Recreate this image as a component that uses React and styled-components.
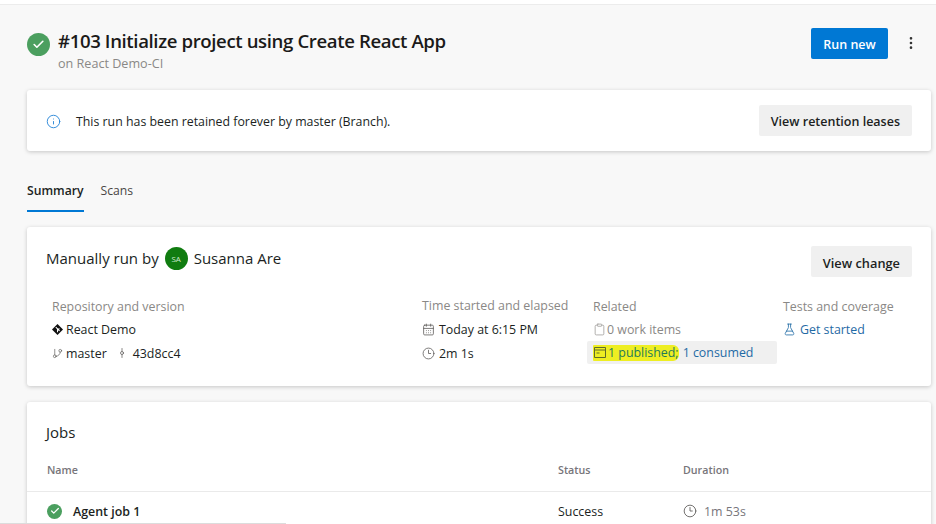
import styled, { createGlobalStyle } from "styled-components";
import { Info, CalendarDays, Clock3, GitBranch, GitCommitVertical, Clipboard, FlaskConical, Check, MoreVertical } from "lucide-react";

const Global = createGlobalStyle`
  html, body { margin: 0; padding: 0; background: #f8f8f8; }
  body { font-family: "Open Sans", "Noto Sans", sans-serif; color: #201f1e; overflow: hidden; }
`;

const Page = styled.div`
  position: relative;
  width: 936px;
  height: 524px;
  overflow: hidden;
  box-sizing: border-box;
  padding: 24px 5px 0 27px;
  border-top: 4px solid #fff;
  box-shadow: inset 0 1px 0 #ececec;
  background: #f8f8f8;
`;

const Header = styled.header`
  display: flex;
  align-items: flex-start;
  height: 62px;
`;

const StatusDot = styled.span`
  display: flex;
  align-items: center;
  justify-content: center;
  flex: none;
  width: ${(p) => p.size}px;
  height: ${(p) => p.size}px;
  border-radius: 50%;
  background: #4b9f5f;
  color: #fff;
`;

const TitleDot = styled(StatusDot)`
  margin-top: 5px;
`;

const TitleBlock = styled.div`
  margin-left: 8px;
  flex: 1;
`;

const Title = styled.h1`
  margin: -1px 0 2px;
  font-size: 18.6px;
  line-height: 27px;
  font-weight: 600;
  color: #1b1a19;
  letter-spacing: -0.38px;
`;

const Subtitle = styled.div`
  font-size: 12.6px;
  line-height: 16px;
  color: #8a8886;
`;

const PrimaryButton = styled.button`
  width: 77px;
  height: 31px;
  padding: 2px 0 0;
  border: 0;
  border-radius: 2px;
  background: #0078d4;
  color: #fff;
  font: 600 12.5px "Open Sans", sans-serif;
`;

const MoreButton = styled.span`
  display: flex;
  margin: 7px 12px 0 15px;
  color: #333;
`;

const Card = styled.section`
  background: #fff;
  border-radius: 3px;
  box-shadow: 0 1px 4px rgba(0, 0, 0, 0.2);
`;

const Banner = styled(Card)`
  display: flex;
  align-items: center;
  height: 61px;
  padding: 0 19px;
`;

const BannerIcon = styled.span`
  display: flex;
  margin-top: 1px;
  color: #2b88d8;
`;

const BannerText = styled.span`
  flex: 1;
  margin-left: 15px;
  padding-top: 2px;
  font-size: 12.35px;
`;

const SecondaryButton = styled.button`
  height: 31px;
  padding: 2px 12px 0;
  border: 0;
  border-radius: 2px;
  background: #f0f0f0;
  color: #201f1e;
  font: 600 ${(p) => p.$size}px "Open Sans", sans-serif;
`;

const Tabs = styled.nav`
  display: flex;
  gap: 17px;
  height: 45px;
  margin-top: 16px;
  margin-bottom: 15px;
`;

const Tab = styled.span`
  display: flex;
  align-items: center;
  box-sizing: border-box;
  height: 45px;
  padding-top: 3px;
  font-size: 12.2px;
  font-weight: ${(p) => (p.$active ? 600 : 400)};
  color: ${(p) => (p.$active ? "#201f1e" : "#484644")};
  border-bottom: 2px solid ${(p) => (p.$active ? "#0078d4" : "transparent")};
`;

const SummaryCard = styled(Card)`
  height: 159px;
  box-sizing: border-box;
  padding: 19px 19px 0;
`;

const SummaryHead = styled.div`
  display: flex;
  align-items: flex-start;
  height: 48px;
`;

const RunBy = styled.div`
  display: flex;
  align-items: center;
  flex: 1;
  height: 24px;
  font-size: 15px;
  color: #201f1e;
`;

const Avatar = styled.span`
  display: flex;
  align-items: center;
  justify-content: center;
  width: 23px;
  height: 23px;
  margin: 0 6px;
  border-radius: 50%;
  background: #107c10;
  color: #cfe8cf;
  font-size: 8px;
`;

const Columns = styled.div`
  display: grid;
  grid-template-columns: 370px 171px 190px 1fr;
  padding-left: 6px;
`;

const Column = styled.div`
  display: flex;
  flex-direction: column;
`;

const Label = styled.div`
  box-sizing: border-box;
  height: 23px;
  padding-top: ${(p) => p.$top}px;
  font-size: 12.4px;
  line-height: 21px;
  color: #8a8886;
  white-space: nowrap;
`;

const Row = styled.div`
  display: flex;
  align-items: center;
  gap: ${(p) => p.$gap}px;
  height: 24px;
  font-size: 12.4px;
  white-space: nowrap;
  color: ${(p) => p.$color || "#201f1e"};
`;

const RowIcon = styled.span`
  display: flex;
  color: ${(p) => p.$color || "#605e5c"};
`;

const Commit = styled.span`
  display: flex;
  align-items: center;
  gap: 5px;
  margin-left: 6px;
`;

const RelatedRow = styled.div`
  display: flex;
  align-items: center;
  width: 190px;
  height: 23px;
  margin: 0 0 0 -6px;
  padding-left: 6px;
  box-sizing: border-box;
  border-radius: 2px;
  background: #f0f0f0;
  font-size: 12.4px;
  color: #1f6aa5;
  white-space: nowrap;
`;

const Highlight = styled.span`
  display: flex;
  align-items: center;
  gap: 1px;
  height: 16px;
  margin-right: 4px;
  border-radius: 1px 6px 6px 1px;
  background: #eeee22;
  color: #1f7a5a;
`;

const JobsCard = styled(Card)`
  height: 140px;
  margin-top: 16px;
  padding-top: 18px;
`;

const JobsTitle = styled.h2`
  margin: 0 19px;
  font-size: 15px;
  line-height: 25px;
  font-weight: 400;
`;

const JobsGrid = styled.div`
  display: grid;
  grid-template-columns: 511px 125px 1fr;
  align-items: center;
  box-sizing: border-box;
  padding-left: 20px;
  height: ${(p) => p.$h}px;
  padding-top: ${(p) => (p.$head ? 3 : 0)}px;
  border-bottom: ${(p) => (p.$head ? "1px solid #eaeaea" : "0")};
`;

const ColHead = styled.span`
  font-size: 10.7px;
  font-weight: 600;
  color: #77757a;
`;

const JobName = styled.span`
  display: flex;
  align-items: center;
  gap: 11px;
  font-size: 12.4px;
  font-weight: 600;
`;

const Cell = styled.span`
  display: flex;
  align-items: center;
  gap: 7px;
  font-size: 12.4px;
  color: ${(p) => p.$color || "#201f1e"};
`;

const CropEdge = styled.div`
  position: absolute;
  left: 0;
  bottom: 0;
  width: 286px;
  height: 1px;
  background: #dcdcdc;
`;

const RepoIcon = () => (
  <svg width="11" height="11" viewBox="0 0 16 16" aria-hidden="true">
    <path fill="#111" d="M8 0 16 8 8 16 0 8Z" />
    <path fill="none" stroke="#fff" strokeWidth="1.5" d="M5.5 4.5 11 10M8 7.5V12M8 7.5 11 7" />
  </svg>
);

const ArtifactIcon = () => (
  <svg width="14" height="13" viewBox="0 0 14 13" fill="none" stroke="#5f6a2a" strokeWidth="1" aria-hidden="true">
    <path d="M1.5 1.5h11v2.5h-11zM1.5 4v7.5h11V4M3.5 7h3" />
  </svg>
);

export default function App() {
  return (
    <Page>
      <Global />
      <Header>
        <TitleDot size={23}>
          <Check size={13} strokeWidth={3} />
        </TitleDot>
        <TitleBlock>
          <Title>#103 Initialize project using Create React App</Title>
          <Subtitle>on React Demo-CI</Subtitle>
        </TitleBlock>
        <PrimaryButton>Run new</PrimaryButton>
        <MoreButton>
          <MoreVertical size={16} strokeWidth={2} />
        </MoreButton>
      </Header>

      <Banner>
        <BannerIcon>
          <Info size={15} strokeWidth={1.5} />
        </BannerIcon>
        <BannerText>This run has been retained forever by master (Branch).</BannerText>
        <SecondaryButton $size={12.5}>View retention leases</SecondaryButton>
      </Banner>

      <Tabs>
        <Tab $active>Summary</Tab>
        <Tab>Scans</Tab>
      </Tabs>

      <SummaryCard>
        <SummaryHead>
          <RunBy>
            Manually run by
            <Avatar>SA</Avatar>
            Susanna Are
          </RunBy>
          <SecondaryButton $size={12.8}>View change</SecondaryButton>
        </SummaryHead>
        <Columns>
          <Column>
            <Label $top={2}>Repository and version</Label>
            <Row $gap={3}>
              <RepoIcon />
              React Demo
            </Row>
            <Row $gap={3}>
              <RowIcon>
                <GitBranch size={11} strokeWidth={1.5} />
              </RowIcon>
              master
              <Commit>
                <RowIcon>
                  <GitCommitVertical size={12} strokeWidth={1.5} />
                </RowIcon>
                43d8cc4
              </Commit>
            </Row>
          </Column>
          <Column>
            <Label $top={1}>Time started and elapsed</Label>
            <Row $gap={4}>
              <RowIcon>
                <CalendarDays size={13} strokeWidth={1.5} />
              </RowIcon>
              Today at 6:15 PM
            </Row>
            <Row $gap={4}>
              <RowIcon>
                <Clock3 size={13} strokeWidth={1.5} />
              </RowIcon>
              2m 1s
            </Row>
          </Column>
          <Column>
            <Label $top={2}>Related</Label>
            <Row $color="#8a8886" $gap={1}>
              <RowIcon $color="#a19f9d">
                <Clipboard size={13} strokeWidth={1.5} />
              </RowIcon>
              0 work items
            </Row>
            <RelatedRow>
              <Highlight>
                <ArtifactIcon />1 published;
              </Highlight>
              1 consumed
            </RelatedRow>
          </Column>
          <Column>
            <Label $top={2}>Tests and coverage</Label>
            <Row $color="#1f6aa5" $gap={4}>
              <RowIcon $color="#1f6aa5">
                <FlaskConical size={13} strokeWidth={1.5} />
              </RowIcon>
              Get started
            </Row>
          </Column>
        </Columns>
      </SummaryCard>

      <JobsCard>
        <JobsTitle>Jobs</JobsTitle>
        <JobsGrid $head $h={47}>
          <ColHead>Name</ColHead>
          <ColHead>Status</ColHead>
          <ColHead>Duration</ColHead>
        </JobsGrid>
        <JobsGrid $h={38}>
          <JobName>
            <StatusDot size={15}>
              <Check size={10} strokeWidth={3} />
            </StatusDot>
            Agent job 1
          </JobName>
          <Cell>Success</Cell>
          <Cell $color="#77757a">
            <RowIcon>
              <Clock3 size={14} strokeWidth={1.5} />
            </RowIcon>
            1m 53s
          </Cell>
        </JobsGrid>
      </JobsCard>
      <CropEdge />
    </Page>
  );
}
